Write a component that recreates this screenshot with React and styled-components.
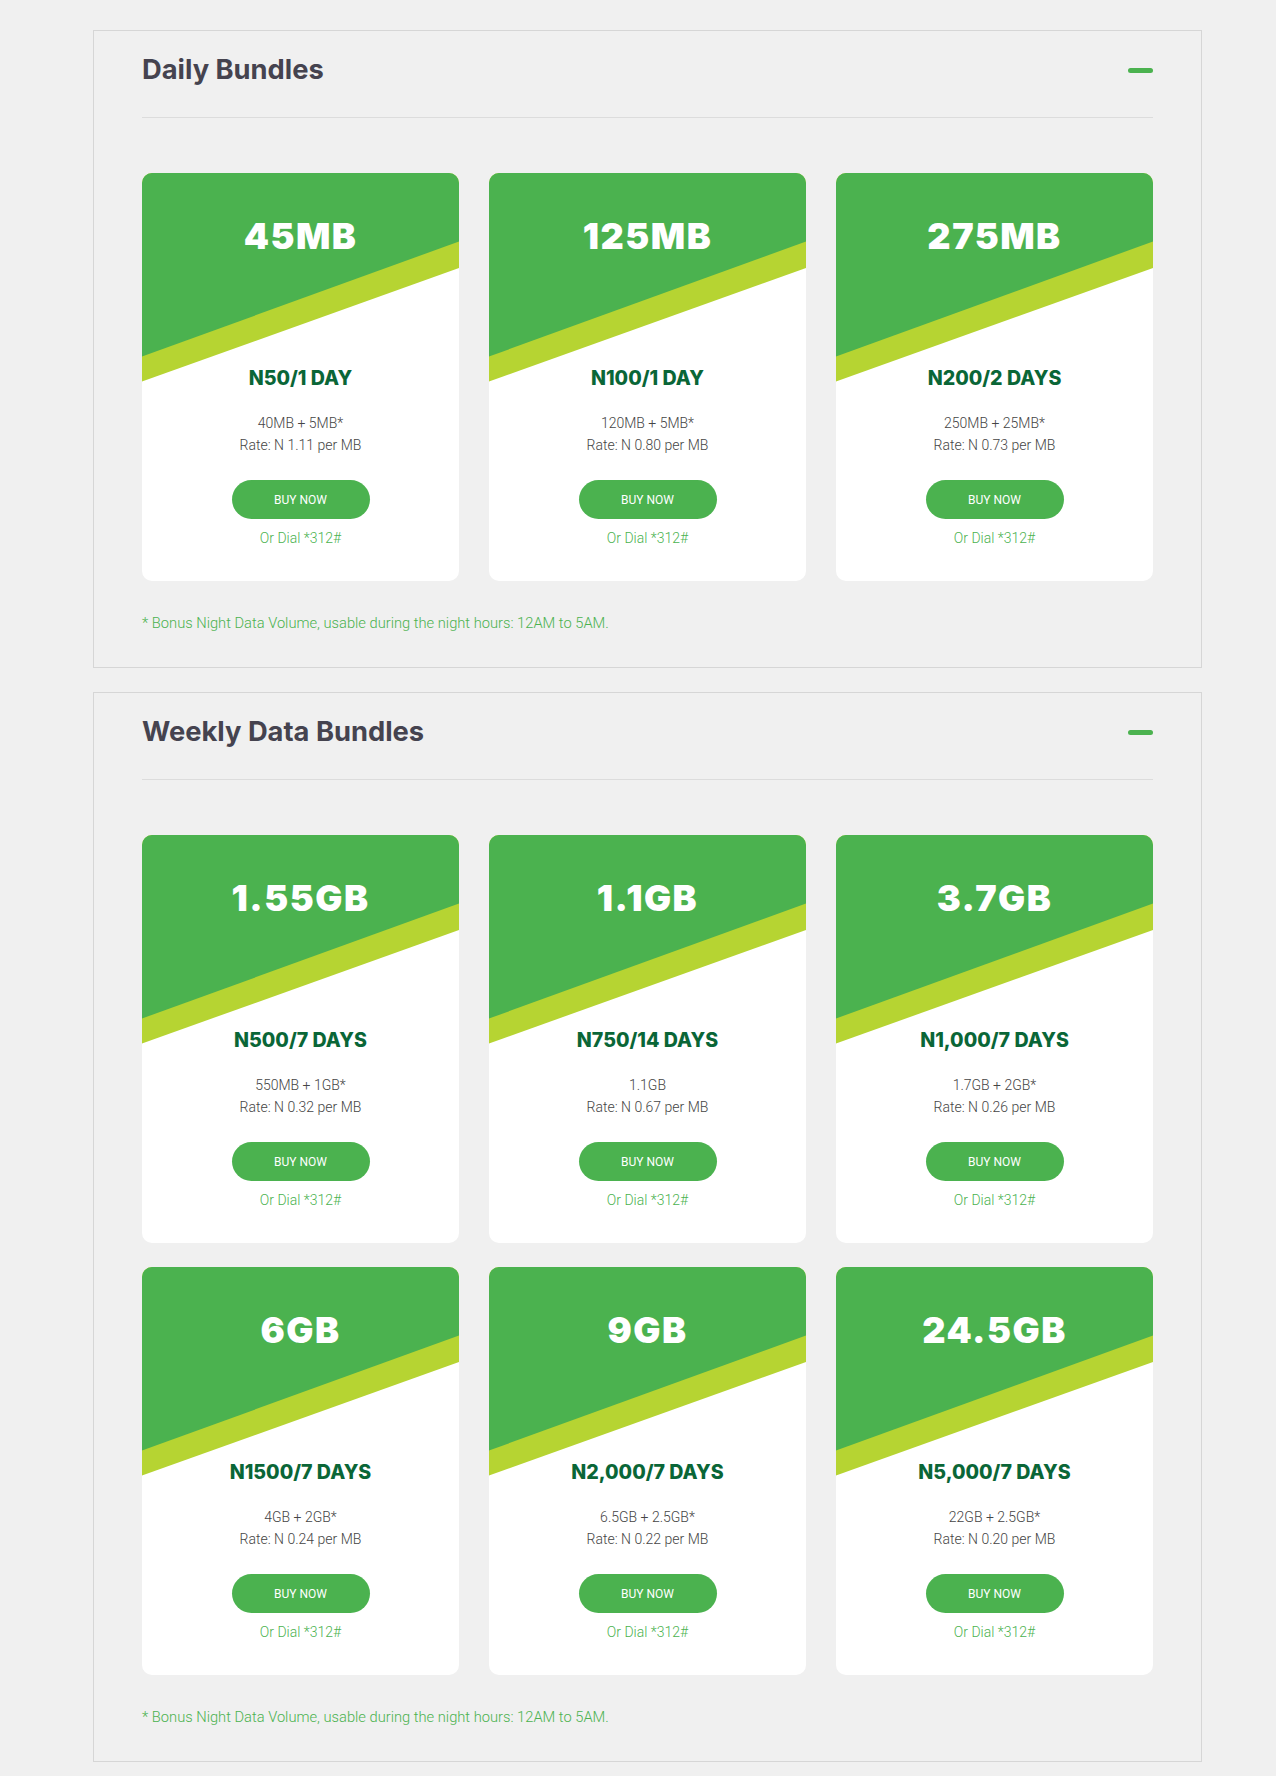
import React from "react";
import styled, { createGlobalStyle } from "styled-components";

const GlobalStyle = createGlobalStyle`
  html, body {
    margin: 0;
    padding: 0;
    background: #f0f0f0;
  }
  body {
    font-family: Roboto, "Liberation Sans", sans-serif;
  }
`;

const Page = styled.div`
  padding: 30px 0 13px 93px;
  display: flex;
  flex-direction: column;
  gap: 24px;
`;

const Section = styled.section`
  width: 1109px;
  box-sizing: border-box;
  border: 1px solid #d6d6d6;
  padding: 0 48px 34px 48px;
`;

const Header = styled.div`
  display: flex;
  align-items: center;
  justify-content: space-between;
  padding: 22px 0 30px;
  border-bottom: 1px solid #dcdcdc;
`;

const Title = styled.h2`
  margin: 0;
  font-family: Inter, "Noto Sans", sans-serif;
  font-weight: 700;
  font-size: 27.3px;
  line-height: 34px;
  color: #45434f;
`;

const Collapse = styled.span`
  display: block;
  width: 25px;
  height: 5px;
  border-radius: 3px;
  background: #4bb24f;
`;

const Grid = styled.div`
  margin-top: 55px;
  display: grid;
  grid-template-columns: repeat(3, 317px);
  column-gap: 30px;
  row-gap: 24px;
`;

const Card = styled.div`
  position: relative;
  background: #fff;
  border-radius: 10px;
  overflow: hidden;
  text-align: center;
  padding-bottom: 33px;

  &::before,
  &::after {
    content: "";
    position: absolute;
    left: 0;
    right: 0;
    top: 0;
    height: 210px;
  }
  &::before {
    background: #b6d432;
    clip-path: polygon(0 0, 100% 0, 100% 95px, 0 208.5px);
  }
  &::after {
    background: #4bb24f;
    clip-path: polygon(0 0, 100% 0, 100% 68.5px, 0 183.5px);
  }
`;

const Banner = styled.div`
  position: relative;
  z-index: 1;
  height: 193px;
  box-sizing: border-box;
  padding-top: 42px;
`;

const Volume = styled.div`
  font-family: Inter, "Noto Sans", sans-serif;
  font-weight: 900;
  font-size: 36px;
  line-height: 42px;
  letter-spacing: 1.5px;
  color: #fff;
`;

const Body = styled.div`
  position: relative;
  z-index: 1;
  display: flex;
  flex-direction: column;
  align-items: center;
`;

const Price = styled.div`
  font-family: Inter, "Noto Sans", sans-serif;
  font-weight: 800;
  font-size: 19.6px;
  line-height: 24px;
  color: #0a6637;
`;

const Details = styled.div`
  margin-top: 22px;
  font-size: 14px;
  font-weight: 300;
  line-height: 22px;
  color: #454545;
`;

const BuyButton = styled.button`
  margin-top: 24px;
  width: 138px;
  height: 39px;
  border: 0;
  border-radius: 20px;
  background: #4bb24f;
  color: #fff;
  font-family: Roboto, "Liberation Sans", sans-serif;
  font-size: 12px;
  font-weight: 400;
  text-transform: uppercase;
  cursor: pointer;
`;

const Dial = styled.div`
  margin-top: 9px;
  font-size: 14px;
  font-weight: 300;
  line-height: 20px;
  color: #4bb24f;
`;

const Note = styled.p`
  margin: 32px 0 0;
  font-size: 14.7px;
  font-weight: 300;
  line-height: 20px;
  color: #4bb24f;
`;

const daily = [
  { size: "45MB", price: "N50/1 DAY", volume: "40MB + 5MB*", rate: "1.11" },
  { size: "125MB", price: "N100/1 DAY", volume: "120MB + 5MB*", rate: "0.80" },
  { size: "275MB", price: "N200/2 DAYS", volume: "250MB + 25MB*", rate: "0.73" },
];

const weekly = [
  { size: "1.55GB", price: "N500/7 DAYS", volume: "550MB + 1GB*", rate: "0.32" },
  { size: "1.1GB", price: "N750/14 DAYS", volume: "1.1GB", rate: "0.67" },
  { size: "3.7GB", price: "N1,000/7 DAYS", volume: "1.7GB + 2GB*", rate: "0.26" },
  { size: "6GB", price: "N1500/7 DAYS", volume: "4GB + 2GB*", rate: "0.24" },
  { size: "9GB", price: "N2,000/7 DAYS", volume: "6.5GB + 2.5GB*", rate: "0.22" },
  { size: "24.5GB", price: "N5,000/7 DAYS", volume: "22GB + 2.5GB*", rate: "0.20" },
];

const Bundle = ({ size, price, volume, rate }) => (
  <Card>
    <Banner>
      <Volume>{size}</Volume>
    </Banner>
    <Body>
      <Price>{price}</Price>
      <Details>
        {volume}
        <br />
        Rate: N {rate} per MB
      </Details>
      <BuyButton>Buy Now</BuyButton>
      <Dial>Or Dial *312#</Dial>
    </Body>
  </Card>
);

const BundleSection = ({ title, items }) => (
  <Section>
    <Header>
      <Title>{title}</Title>
      <Collapse />
    </Header>
    <Grid>
      {items.map((item) => (
        <Bundle key={item.size} {...item} />
      ))}
    </Grid>
    <Note>* Bonus Night Data Volume, usable during the night hours: 12AM to 5AM.</Note>
  </Section>
);

export default function App() {
  return (
    <>
      <GlobalStyle />
      <Page>
        <BundleSection title="Daily Bundles" items={daily} />
        <BundleSection title="Weekly Data Bundles" items={weekly} />
      </Page>
    </>
  );
}
